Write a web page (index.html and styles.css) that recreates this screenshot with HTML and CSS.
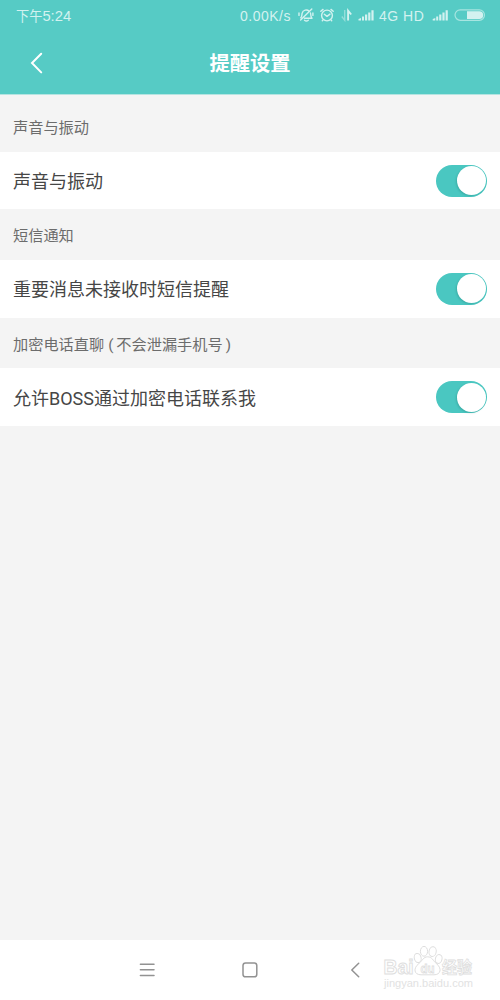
FILE: index.html
```html
<!DOCTYPE html>
<html lang="zh-CN">
<head>
<meta charset="utf-8">
<title>提醒设置</title>
<link rel="stylesheet" href="styles.css">
</head>
<body>
<div class="screen">
  <header class="header">
    <div class="status">
      <span class="time"><span class="period">下午</span>5:24</span>
      <span class="speed">0.00K/s</span>
      <svg class="status-icons" width="78" height="20" viewBox="297 6 78 20" fill="none" stroke="currentColor">
        <g stroke-width="1.4" stroke-linecap="round" stroke-linejoin="round">
          <path d="M300.8 17.8C302.2 16.5 301.7 14.5 302.2 13C303 10 307 9 309 11M310.5 13C310.7 16 310.8 17 312 18.2H304.5M304.5 20.2Q306.3 21.8 308.3 20.2M300.6 20L311.8 9M299 12.9V15.4M312.9 12.9V15.4"/>
          <circle cx="327" cy="15.5" r="5.4"/>
          <path d="M324.3 14.2L327 16.4L330 14.1M320.8 11.2L323 9.4M331 9.4L333.2 11.2M322.9 20.1L322.3 20.8M331.1 20.1L331.7 20.8"/>
        </g>
        <path opacity=".5" stroke-width="1.4" d="M344.7 10V20.3L341.8 16.5"/>
        <path stroke-width="1.9" d="M348.1 20.5V10.7L351.2 14.5"/>
        <path fill="currentColor" stroke="none" d="M358.5 20.5V19L361 18V20.5ZM362 20.5V16.5H364V20.5ZM365 20.5V14.5H367.2V20.5ZM368.2 20.5V12.5H370.4V20.5ZM371.4 20.5V10.3H373.6V20.5Z"/>
      </svg>
      <span class="network">4G HD</span>
      <svg class="battery" width="56" height="20" viewBox="431 6 56 20" fill="currentColor">
        <path d="M432.7 20.5V19L435.3 18V20.5ZM436.2 20.5V16.5H438.2V20.5ZM439.2 20.5V14.5H441.4V20.5ZM442.4 20.5V12.5H444.6V20.5ZM445.6 20.5V10.3H447.8V20.5Z"/>
        <rect x="455" y="9.9" width="29.5" height="10.4" rx="5.2" fill="none" stroke="currentColor" stroke-width="1.2" opacity=".65"/>
        <path d="M467 11.2H479.3A3.9 3.9 0 0 1 479.3 19H467Z"/>
      </svg>
    </div>
    <div class="titlebar">
      <svg class="back" width="14" height="22" viewBox="0 0 14 22"><path d="M11.2 1.7L2 11L11.2 20.4"/></svg>
      <h1 class="title">提醒设置</h1>
    </div>
  </header>
  <main class="settings">
    <h2 class="label label-first">声音与振动</h2>
    <div class="row"><span class="name">声音与振动</span><span class="switch"></span></div>
    <h2 class="label">短信通知</h2>
    <div class="row"><span class="name">重要消息未接收时短信提醒</span><span class="switch"></span></div>
    <h2 class="label">加密电话直聊<span class="open">(</span>不会泄漏手机号<span class="close">)</span></h2>
    <div class="row"><span class="name">允许BOSS通过加密电话联系我</span><span class="switch"></span></div>
  </main>
  <nav class="nav">
    <svg class="nav-icons" width="240" height="20" viewBox="130 960 240 20">
      <path d="M140.4 964.2H154M140.4 969.8H154M140.4 975.4H154"/>
      <rect x="243" y="963" width="13.8" height="13.8" rx="2.6"/>
      <path d="M358.7 963.2L351.8 970L358.7 976.8"/>
    </svg>
    <svg class="watermark" width="100" height="50" viewBox="380 943 100 50">
      <text class="wm-brand" x="383.5" y="974" textLength="30" lengthAdjust="spacingAndGlyphs">Bai</text>
      <g class="paw">
        <path d="M427.7 956.8C432 956.8 433.4 961 436.2 963.4C442.4 968.4 440.8 974.8 434 974.8H421C414 974.8 412.8 968.4 419 963.4C422 961 423.4 956.8 427.7 956.8Z"/>
        <ellipse cx="417.7" cy="958" rx="3.4" ry="4.6" transform="rotate(-15 417.7 958)"/>
        <ellipse cx="424" cy="951.3" rx="3.6" ry="4.9"/>
        <ellipse cx="432.6" cy="951.6" rx="3.6" ry="4.9" transform="rotate(10 432.6 951.6)"/>
        <ellipse cx="438.7" cy="959" rx="3.3" ry="4.5" transform="rotate(15 438.7 959)"/>
      </g>
      <text class="wm-du" x="420.5" y="972.5" textLength="14" lengthAdjust="spacingAndGlyphs">du</text>
      <text class="wm-cn" x="442" y="973" textLength="30" lengthAdjust="spacingAndGlyphs">经验</text>
      <text class="wm-url" x="384" y="986.5" textLength="89" lengthAdjust="spacingAndGlyphs">jingyan.baidu.com</text>
    </svg>
  </nav>
</div>
</body>
</html>
```
FILE: styles.css
```css
* { box-sizing: border-box; }
body {
  margin: 0;
  font-family: Roboto, "Noto Sans CJK SC", sans-serif;
}
.screen {
  width: 500px;
  height: 1000px;
  display: flex;
  flex-direction: column;
  background: #f4f4f4;
  overflow: hidden;
}
.header {
  height: 95px;
  background: #56cbc5;
  border-bottom: 1px solid #b5e4e1;
  color: #fff;
}
.status {
  height: 31px;
  padding-left: 16px;
  display: flex;
  align-items: center;
  font: 14px/31px "Liberation Sans", "Noto Sans CJK SC", sans-serif;
  color: #d3f2f0;
}
.time, .speed, .network { padding-top: 1px; }
.time { width: 224px; font-size: 14.8px; white-space: nowrap; }
.period { font-size: 13.2px; }
.speed { width: 57px; letter-spacing: .5px; }
.network { margin-left: 4px; width: 52px; letter-spacing: .5px; white-space: nowrap; }
.status-icons, .battery { flex: none; }
.titlebar {
  height: 63px;
  display: grid;
  grid-template-columns: 70px 1fr 70px;
  align-items: center;
}
.back {
  margin-left: 29.5px;
  fill: none;
  stroke: #fff;
  stroke-width: 2;
  stroke-linecap: round;
}
.title {
  margin: 0;
  padding-top: 2px;
  text-align: center;
  font-size: 20.3px;
  line-height: 30px;
  font-weight: 700;
}
.settings { flex: 1; }
.label {
  margin: 0;
  height: 50.8px;
  padding-left: 13px;
  font-size: 15.2px;
  line-height: 54px;
  font-weight: 400;
  color: #6c6c6c;
}
.label-first { height: 57px; line-height: 67px; }
.open { margin: 0 3px 0 4px; }
.close { margin-left: 3px; }
.row {
  height: 57.4px;
  padding: 0 13px;
  display: flex;
  align-items: center;
  justify-content: space-between;
  background: #fff;
  font-size: 18px;
  line-height: 28px;
  color: #464646;
}
.name { padding-top: 3px; }
.switch {
  width: 51px;
  height: 32px;
  padding: 1.5px;
  border-radius: 16px;
  background: #4ac7c1;
  display: flex;
  justify-content: flex-end;
}
.switch::after {
  content: "";
  width: 29px;
  height: 29px;
  border-radius: 50%;
  background: #fff;
  box-shadow: -1px 1px 2px rgba(0, 80, 75, .2);
}
.nav {
  height: 60px;
  display: flex;
  align-items: center;
  padding-left: 130px;
  background: #fff;
}
.nav-icons {
  flex: none;
  fill: none;
  stroke: #929292;
  stroke-width: 1.5;
  stroke-linecap: round;
  stroke-linejoin: round;
}
.watermark { flex: none; margin: -4px 0 0 10px; }
.wm-brand, .paw, .wm-cn, .wm-du {
  fill: #fff;
  stroke: #dedede;
  stroke-width: 1;
}
.wm-brand { font: 700 21px "Liberation Sans", sans-serif; }
.wm-du { font: 700 12px "Liberation Sans", sans-serif; stroke-width: .8; }
.wm-cn { font: 700 16px "Noto Sans CJK SC", sans-serif; stroke-width: .8; }
.wm-url { font: 11px "Liberation Sans", sans-serif; fill: #e2e2e2; }
```
